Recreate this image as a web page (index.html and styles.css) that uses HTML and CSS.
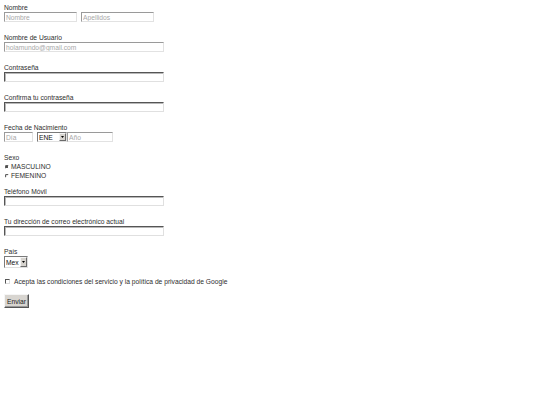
FILE: index.html
```html
<!DOCTYPE html>
<html lang="es">
<head>
<meta charset="utf-8">
<title>Registro</title>
<link rel="stylesheet" href="styles.css">
</head>
<body>
<form class="form">
  <div class="field">
    <label class="lbl">Nombre</label>
    <div class="row gap4">
      <input class="txt ph w73" type="text" placeholder="Nombre">
      <input class="txt ph w73" type="text" placeholder="Apellidos">
    </div>
  </div>
  <div class="field">
    <label class="lbl">Nombre de Usuario</label>
    <input class="txt ph w160" type="text" placeholder="holamundo@gmail.com">
  </div>
  <div class="field">
    <label class="lbl">Contraseña</label>
    <input class="txt dark w160" type="password">
  </div>
  <div class="field">
    <label class="lbl">Confirma tu contraseña</label>
    <input class="txt dark w160" type="password">
  </div>
  <div class="field">
    <label class="lbl">Fecha de Nacimiento</label>
    <div class="row">
      <input class="txt ph w29" type="text" placeholder="Día">
      <div class="sel w30 ml4">
        <select class="sel-in"><option>ENE</option></select>
        <span class="arrow"><svg width="3" height="2" viewBox="0 0 3 2"><path d="M0 0H3L1.5 2Z" fill="#000"/></svg></span>
      </div>
      <input class="txt ph w46 ml3" type="text" placeholder="Año">
    </div>
  </div>
  <div class="field sexo">
    <label class="lbl">Sexo</label>
    <div class="radio-row"><span class="radio on"></span><span>MASCULINO</span></div>
    <div class="radio-row"><span class="radio"></span><span>FEMENINO</span></div>
  </div>
  <div class="field">
    <label class="lbl">Teléfono Móvil</label>
    <input class="txt dark w160" type="text">
  </div>
  <div class="field">
    <label class="lbl">Tu dirección de correo electrónico actual</label>
    <input class="txt dark w160" type="text">
  </div>
  <div class="field pais">
    <label class="lbl">País</label>
    <div class="sel sel-pais w24">
      <select class="sel-in"><option>Mex</option></select>
      <span class="arrow"><svg width="3" height="2" viewBox="0 0 3 2"><path d="M0 0H3L1.5 2Z" fill="#000"/></svg></span>
    </div>
  </div>
  <div class="check-row">
    <span class="check"></span>
    <span>Acepta las condiciones del servicio y la política de privacidad de Google</span>
  </div>
  <div class="actions">
    <button class="btn" type="button">Enviar</button>
  </div>
</form>
</body>
</html>
```
FILE: styles.css
```css
html, body {
  margin: 0;
  background: #fff;
}
body {
  font-family: "Liberation Sans", Arial, sans-serif;
  font-size: 6.7px;
  color: #2e2e2e;
}
.form {
  display: flex;
  flex-direction: column;
  align-items: flex-start;
  padding: 3px 0 0 4px;
}
.field {
  display: flex;
  flex-direction: column;
  align-items: flex-start;
  margin-bottom: 11px;
}
.lbl {
  height: 9px;
  line-height: 9px;
  white-space: nowrap;
}
.row {
  display: flex;
  align-items: flex-start;
}
.gap4 { gap: 4px; }
.ml4 { margin-left: 4px; }
.ml3 { margin-left: 3px; }
.txt {
  box-sizing: border-box;
  flex: none;
  height: 10px;
  margin: 0;
  padding: 0 1px;
  font-family: inherit;
  font-size: 6.7px;
  line-height: 8px;
  color: #222;
  background: #fff;
  border: 1px solid;
  outline: none;
}
.txt::placeholder { color: #a8a8a8; }
.ph {
  border-color: #9a9a9a #e2e2e2 #e2e2e2 #9a9a9a;
}
.dark {
  border-color: #555 #e0e0e0 #e0e0e0 #555;
  box-shadow: inset 1px 1px 0 #b8b8b8;
}
.w73 { width: 73px; }
.w160 { width: 160px; }
.w29 { width: 29px; }
.w30 { width: 30px; }
.w46 { width: 46px; }
.w24 { width: 24px; }
.sel {
  box-sizing: border-box;
  flex: none;
  height: 10px;
  display: flex;
  background: #fff;
  border-width: 1px;
  border-style: solid;
  border-color: #7a7a7a #e0e0e0 #e0e0e0 #7a7a7a;
}
.sel-pais { height: 12px; }
.sel-in {
  appearance: none;
  -webkit-appearance: none;
  flex: 1;
  min-width: 0;
  margin: 0;
  padding: 0 0 0 1px;
  border: 0;
  background: transparent;
  font-family: inherit;
  font-size: 6.7px;
  color: #111;
  outline: none;
}
.arrow {
  box-sizing: border-box;
  width: 7px;
  display: flex;
  align-items: center;
  justify-content: center;
  background: #d6d3ce;
  border-width: 1px;
  border-style: solid;
  border-color: #f4f4f4 #6a6a6a #6a6a6a #f4f4f4;
}
.sexo { margin-bottom: 7px; }
.pais { margin-bottom: 9px; }
.radio-row {
  height: 9px;
  display: flex;
  align-items: center;
  gap: 2px;
  padding-left: 1px;
}
.radio {
  box-sizing: border-box;
  width: 4px;
  height: 4px;
  border-radius: 50%;
  border-top: 1px solid #444;
  border-left: 1px solid #444;
  border-right: 1px solid transparent;
  border-bottom: 1px solid transparent;
  position: relative;
}
.radio.on::after {
  content: "";
  position: absolute;
  left: 0;
  top: 0;
  width: 2px;
  height: 2px;
  border-radius: 50%;
  background: #222;
}
.check-row {
  display: flex;
  align-items: center;
  gap: 4px;
  height: 9px;
  padding-left: 1px;
}
.check {
  box-sizing: border-box;
  width: 5px;
  height: 5px;
  border-width: 1px;
  border-style: solid;
  border-color: #555 #ddd #ddd #555;
}
.actions {
  margin-top: 8px;
}
.btn {
  box-sizing: border-box;
  width: 25px;
  height: 14px;
  padding: 0;
  margin: 0;
  font-family: inherit;
  font-size: 6.7px;
  color: #222;
  background: #d8d5d0;
  border-width: 1px;
  border-style: solid;
  border-color: #f6f6f6 #555 #555 #f6f6f6;
  box-shadow: inset -1px -1px 0 #999;
}
```
